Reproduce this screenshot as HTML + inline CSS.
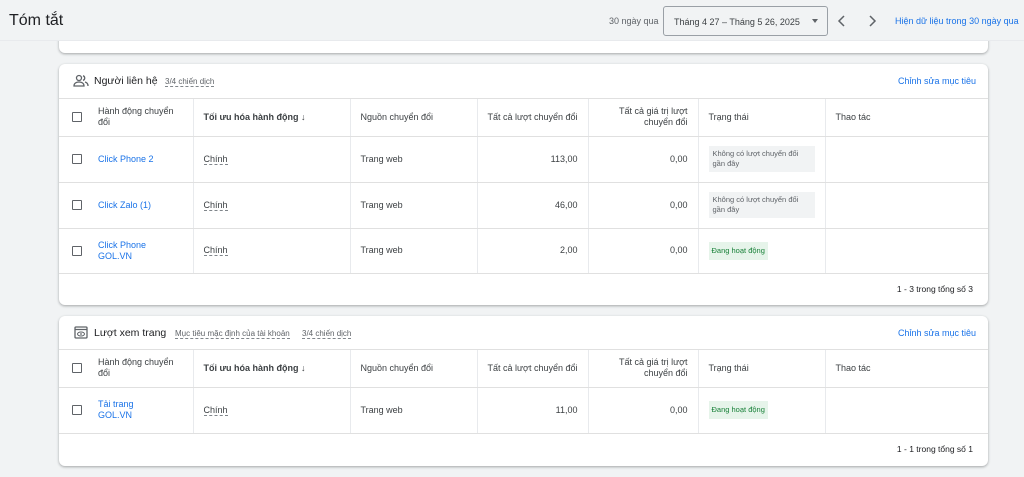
<!DOCTYPE html>
<html><head><meta charset="utf-8"><style>
*{box-sizing:border-box;margin:0;padding:0}
body{width:1024px;height:477px;overflow:hidden;background:#f1f3f4;font-family:"Liberation Sans",Arial,sans-serif;color:#3c4043;position:relative}
.abs{position:absolute}
.hdr{left:0;top:0;width:1024px;height:41px;background:#f1f3f4;z-index:5;border-bottom:1px solid #e8eaed}
.z{z-index:6}
.title{left:9px;top:12px;font-size:16px;color:#202124}
.card{position:absolute;left:59px;width:929px;background:#fff;border-radius:6px;box-shadow:0 1px 2px rgba(60,64,67,.3),0 1px 3px rgba(60,64,67,.15);overflow:hidden}
table{border-collapse:collapse;width:929px;table-layout:fixed;font-size:9px}
td,th{border-right:1px solid #e8eaed;border-bottom:1px solid #e0e0e0;padding:0 10px;vertical-align:middle;text-align:left;font-weight:normal;line-height:11px}
th{color:#3c4043;font-weight:normal}
td:last-child,th:last-child{border-right:none}
.num{text-align:right}
.cb{display:inline-block;width:10px;height:10px;border:1.5px solid #5f6368;border-radius:1px;vertical-align:middle}
.link{color:#1a73e8}
.dash{border-bottom:1px dashed #80868b}
.pill{display:inline-block;background:#f1f3f4;padding:3px 4px;font-size:7.5px;line-height:10px;color:#5f6368;width:106px}
.green{display:inline-block;background:#e6f4ea;color:#188038;padding:4px 3px;font-size:7.5px;line-height:10px}
.ct{height:35px;position:relative;border-bottom:1px solid #e0e0e0}
.foot{font-size:8.5px;text-align:right;padding-right:15px;color:#202124}
</style></head><body>
<div class="abs hdr"></div>
<div class="abs title z">Tóm tắt</div>
<div class="abs z" style="left:609px;top:16px;font-size:9px;color:#5f6368">30 ngày qua</div>
<div class="abs z" style="left:663px;top:6px;width:165px;height:30px;border:1px solid #9aa0a6;border-radius:3px;font-size:9px;color:#3c4043;padding:10px 0 0 10px">Tháng 4 27 – Tháng 5 26, 2025<span style="position:absolute;right:9px;top:12px;border-left:3px solid transparent;border-right:3px solid transparent;border-top:4px solid #5f6368"></span></div>
<svg class="abs z" style="left:836px;top:14px" width="12" height="14"><path d="M8 2L3 7l5 5" stroke="#5f6368" stroke-width="1.5" fill="none"/></svg>
<svg class="abs z" style="left:866px;top:14px" width="12" height="14"><path d="M4 2l5 5-5 5" stroke="#5f6368" stroke-width="1.5" fill="none"/></svg>
<div class="abs z" style="left:895px;top:16px;font-size:9px;color:#1a73e8;white-space:nowrap">Hiện dữ liệu trong 30 ngày qua</div>

<div class="card" style="top:20px;height:33px"></div>

<div class="card" style="top:64px;height:241px">
<div class="ct">
<svg class="abs" style="left:14px;top:10px" width="16" height="14" viewBox="0 0 16 14"><circle cx="6" cy="4" r="2.5" stroke="#5f6368" stroke-width="1.3" fill="none"/><path d="M1 12c0-3 2.5-4 5-4s5 1 5 4z" stroke="#5f6368" stroke-width="1.3" fill="none"/><path d="M10 1.8a2.4 2.4 0 010 4.6M12 8c2 .5 3 1.5 3 4" stroke="#5f6368" stroke-width="1.3" fill="none"/></svg>
<span class="abs" style="left:35px;top:11px;font-size:10.5px;color:#202124">Người liên hệ</span>
<span class="abs dash" style="left:106px;top:13px;font-size:8px;color:#5f6368">3/4 chiến dịch</span>
<span class="abs link" style="right:12px;top:12px;font-size:9px">Chỉnh sửa mục tiêu</span>
</div>
<table>
<colgroup><col style="width:134px"><col style="width:157px"><col style="width:127px"><col style="width:111px"><col style="width:110px"><col style="width:127px"><col style="width:163px"></colgroup>
<tr style="height:37px"><th><span class="cb" style="margin-right:16px;margin-left:3px"></span><span style="display:inline-block;vertical-align:middle;width:80px">Hành động chuyển đổi</span></th><th style="font-weight:bold">Tối ưu hóa hành động ↓</th><th>Nguồn chuyển đổi</th><th class="num">Tất cả lượt chuyển đổi</th><th class="num">Tất cả giá trị lượt chuyển đổi</th><th>Trạng thái</th><th>Thao tác</th></tr>
<tr style="height:46px"><td><span class="cb" style="margin-right:16px;margin-left:3px"></span><span class="link">Click Phone 2</span></td><td><span class="dash">Chính</span></td><td>Trang web</td><td class="num">113,00</td><td class="num">0,00</td><td><span class="pill">Không có lượt chuyển đổi gần đây</span></td><td></td></tr>
<tr style="height:46px"><td><span class="cb" style="margin-right:16px;margin-left:3px"></span><span class="link">Click Zalo (1)</span></td><td><span class="dash">Chính</span></td><td>Trang web</td><td class="num">46,00</td><td class="num">0,00</td><td><span class="pill">Không có lượt chuyển đổi gần đây</span></td><td></td></tr>
<tr style="height:45px"><td><span class="cb" style="margin-right:16px;margin-left:3px"></span><span class="link" style="display:inline-block;vertical-align:middle">Click Phone<br>GOL.VN</span></td><td><span class="dash">Chính</span></td><td>Trang web</td><td class="num">2,00</td><td class="num">0,00</td><td><span class="green">Đang hoạt động</span></td><td></td></tr>
<tr style="height:33px"><td colspan="7" class="foot" style="border-bottom:none">1 - 3 trong tổng số 3</td></tr>
</table>
</div>

<div class="card" style="top:316px;height:150px">
<div class="ct" style="height:34px">
<svg class="abs" style="left:15px;top:10px" width="14" height="13" viewBox="0 0 14 13"><rect x="1" y="1" width="12" height="11" rx="1" stroke="#5f6368" stroke-width="1.3" fill="none"/><path d="M1 3.5h12" stroke="#5f6368" stroke-width="1.3"/><ellipse cx="7" cy="8" rx="3.5" ry="2" stroke="#5f6368" stroke-width="1" fill="none"/><circle cx="7" cy="8" r=".9" fill="#5f6368"/></svg>
<span class="abs" style="left:35px;top:11px;font-size:10.5px;color:#202124">Lượt xem trang</span>
<span class="abs dash" style="left:116px;top:13px;font-size:8px;color:#5f6368">Mục tiêu mặc định của tài khoản</span>
<span class="abs dash" style="left:243px;top:13px;font-size:8px;color:#5f6368">3/4 chiến dịch</span>
<span class="abs link" style="right:12px;top:12px;font-size:9px">Chỉnh sửa mục tiêu</span>
</div>
<table>
<colgroup><col style="width:134px"><col style="width:157px"><col style="width:127px"><col style="width:111px"><col style="width:110px"><col style="width:127px"><col style="width:163px"></colgroup>
<tr style="height:37px"><th><span class="cb" style="margin-right:16px;margin-left:3px"></span><span style="display:inline-block;vertical-align:middle;width:80px">Hành động chuyển đổi</span></th><th style="font-weight:bold">Tối ưu hóa hành động ↓</th><th>Nguồn chuyển đổi</th><th class="num">Tất cả lượt chuyển đổi</th><th class="num">Tất cả giá trị lượt chuyển đổi</th><th>Trạng thái</th><th>Thao tác</th></tr>
<tr style="height:46px"><td><span class="cb" style="margin-right:16px;margin-left:3px"></span><span class="link" style="display:inline-block;vertical-align:middle">Tải trang<br>GOL.VN</span></td><td><span class="dash">Chính</span></td><td>Trang web</td><td class="num">11,00</td><td class="num">0,00</td><td><span class="green">Đang hoạt động</span></td><td></td></tr>
<tr style="height:33px"><td colspan="7" class="foot" style="border-bottom:none">1 - 1 trong tổng số 1</td></tr>
</table>
</div>
</body></html>
